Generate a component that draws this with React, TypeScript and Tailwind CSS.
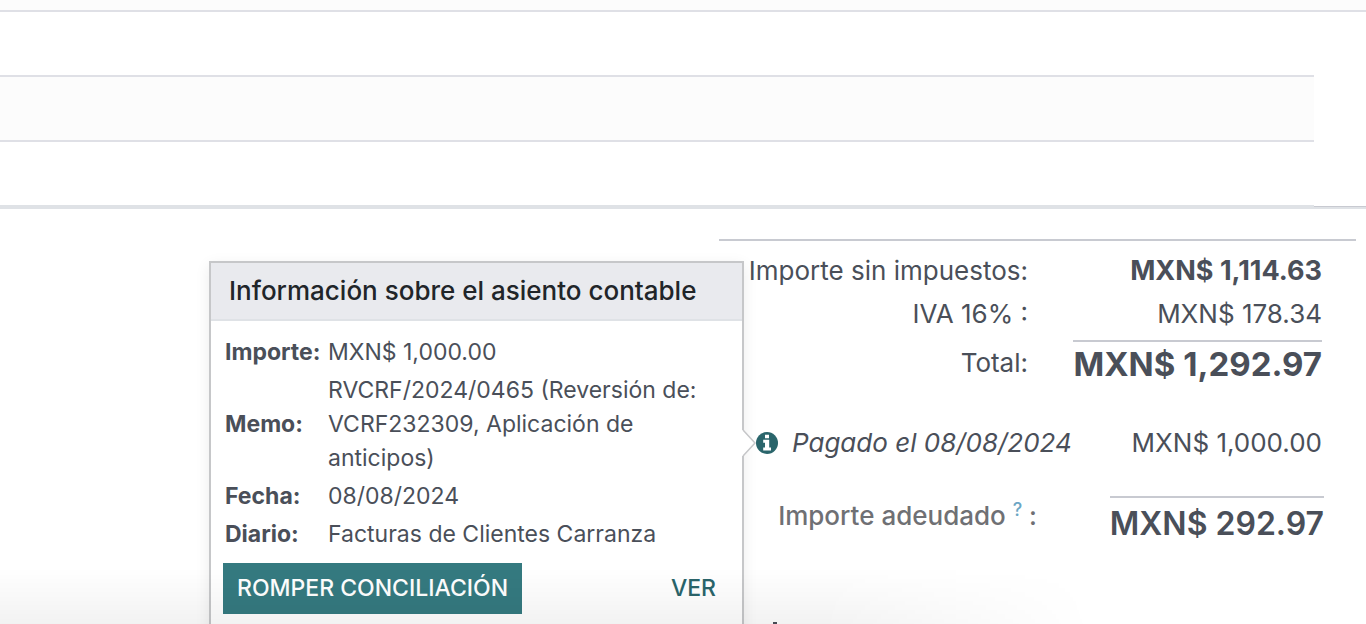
import React from "react";

const details = [
  { label: "Importe:", value: "MXN$ 1,000.00" },
  { label: "Memo:", value: "RVCRF/2024/0465 (Reversión de: VCRF232309, Aplicación de anticipos)" },
  { label: "Fecha:", value: "08/08/2024" },
  { label: "Diario:", value: "Facturas de Clientes Carranza" },
];

function InfoIcon() {
  return (
    <svg viewBox="0 0 22 22" className="block size-[22px]" aria-hidden="true">
      <circle cx="11" cy="11" r="11" fill="#2a656b" />
      <path fill="#fff" d="M9 2.8h4v3.4H9zM7.2 7.8h6v7.6h1.8v3H7.2v-3H9v-4.6H7.2z" />
    </svg>
  );
}

function PaymentPopover() {
  return (
    <section className="absolute top-0 right-full z-10 -mt-[171px] mr-[12px] w-[535px] border-2 border-[#c6c7c9] bg-white shadow-[0_4px_14px_rgba(0,0,0,0.08)]">
      <h3 className="border-b-2 border-[#dfe2e6] bg-[#e9eaee] px-[18px] py-2 text-[26px] leading-[40px] font-medium text-[#212529]">
        Información sobre el asiento contable
      </h3>
      <div className="px-3 pt-3 pb-5">
        <table className="w-full text-left text-[23px] leading-[34px] text-[#4a4f59]">
          <tbody>
            {details.map((d) => (
              <tr key={d.label}>
                <th scope="row" className="w-[105px] py-[2px] pl-[2px] font-bold">{d.label}</th>
                <td className="py-[2px] pr-2">{d.value}</td>
              </tr>
            ))}
          </tbody>
        </table>
        <div className="flex items-center justify-between pt-[10px] pr-[14px]">
          <button type="button" className="bg-[#357a80] px-[14px] py-2 text-[23px] leading-[35px] font-medium text-white">
            ROMPER CONCILIACIÓN
          </button>
          <button type="button" className="text-[23px] leading-[35px] font-medium text-[#2a656b]">VER</button>
        </div>
      </div>
      <svg viewBox="0 0 14 26" className="absolute top-[167px] -right-[14px] h-[26px] w-[14px]" aria-hidden="true">
        <path d="M0 0h1l12 13L1 26H0z" fill="#fff" />
        <path d="M1 0l12 13L1 26" fill="none" stroke="#c6c7c9" strokeWidth="1.5" />
      </svg>
    </section>
  );
}

export default function App() {
  return (
    <main className="relative h-screen overflow-hidden bg-white font-['Inter','Liberation_Sans',sans-serif] text-[26px] leading-[38px] text-[#4a4f59]">
      <div className="h-3 border-b-2 border-[#dfe0e6] bg-[#fcfcfc]" />
      <div className="flex items-end">
        <div className="flex-1">
          <div className="h-[65px] border-b-2 border-[#dfe0e6]" />
          <div className="h-[65px] border-b-2 border-[#dfe0e6] bg-[#fcfcfc]" />
          <div className="h-[67px] border-b-4 border-[#dfe2e6]" />
        </div>
        <div className="h-[3px] w-[52px] border-t border-[#c8cad1] bg-[#dfe2e6]" />
      </div>

      <section className="mt-[30px] mr-[10px] ml-auto w-[637px] border-t-2 border-[#c8cad1] pt-[11px] pr-[34px]">
        <div className="flex justify-end">
          <span>Importe sin impuestos:</span>
          <strong className="w-[294px] text-right text-[27px] font-bold">MXN$ 1,114.63</strong>
        </div>
        <div className="mt-[5px] flex justify-end">
          <span>IVA 16% :</span>
          <span className="w-[294px] text-right">MXN$ 178.34</span>
        </div>
        <div className="mt-[7px] flex items-center justify-end">
          <span>Total:</span>
          <div className="flex w-[294px] justify-end">
            <strong className="border-t-2 border-[#c8cad1] text-[33px] leading-[44px] font-bold whitespace-nowrap">MXN$ 1,292.97</strong>
          </div>
        </div>
        <div className="mt-[38px] flex items-center justify-between pl-[37px]">
          <div className="flex items-center gap-[14px]">
            <div className="relative">
              <button type="button" aria-label="Información del pago" className="block"><InfoIcon /></button>
              <PaymentPopover />
            </div>
            <em>Pagado el 08/08/2024</em>
          </div>
          <span>MXN$ 1,000.00</span>
        </div>
        <div className="-mr-[2px] mt-[34px] flex items-start justify-end">
          <span className="pt-[1px] font-medium text-[#6f7074]">
            Importe adeudado <sup className="text-[18px] text-[#6ca6c4]">?</sup> :
          </span>
          <div className="flex w-[287px] justify-end">
            <strong className="border-t-2 border-[#c8cad1] pt-[5px] text-[32px] leading-[42px] font-semibold whitespace-nowrap">MXN$ 292.97</strong>
          </div>
        </div>
        <div className="mt-[77px] ml-[54px] h-2 w-1 bg-[#4a4f59]" />
      </section>
      <div className="pointer-events-none absolute inset-x-0 bottom-0 z-20 h-[56px] bg-linear-to-b from-transparent to-black/5 [mask-image:linear-gradient(to_right,black_60%,transparent_80%)]" />
    </main>
  );
}
